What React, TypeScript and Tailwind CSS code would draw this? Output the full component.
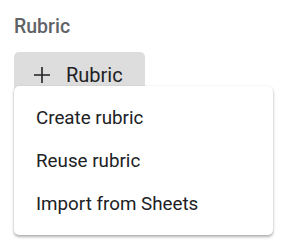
const items = ["Create rubric", "Reuse rubric", "Import from Sheets"];

export default function App() {
  return (
    <div className="h-[249px] w-[291px] bg-white font-['Roboto',sans-serif]">
      <div className="relative px-[14px] pt-[15px]">
        <h2 className="text-[19.5px] leading-[24px] font-medium text-[#5f6368]">Rubric</h2>

        {/* Add rubric button */}
        <button className="mt-[13px] flex h-[46px] w-[131px] items-center gap-[16px] rounded-[5px] bg-[#dddddd] pl-[20px] text-[20px] text-[#202124]">
          <svg width="16" height="16" viewBox="0 0 16 16" className="shrink-0">
            <path d="M8 0v16M0 8h16" stroke="#202124" strokeWidth="1.6" />
          </svg>
          <span>Rubric</span>
        </button>

        {/* Dropdown menu */}
        <div className="absolute left-[14px] top-[86px] w-[259px] rounded-[5px] bg-white py-[10px] shadow-[0_2px_3px_rgba(0,0,0,0.3),0_0_2px_rgba(0,0,0,0.08)]">
          {items.map((label) => (
            <div key={label} className="flex h-[43px] items-center px-[22px] pt-[1px] text-[18.8px] text-[#202124]">
              {label}
            </div>
          ))}
        </div>
      </div>
    </div>
  );
}
